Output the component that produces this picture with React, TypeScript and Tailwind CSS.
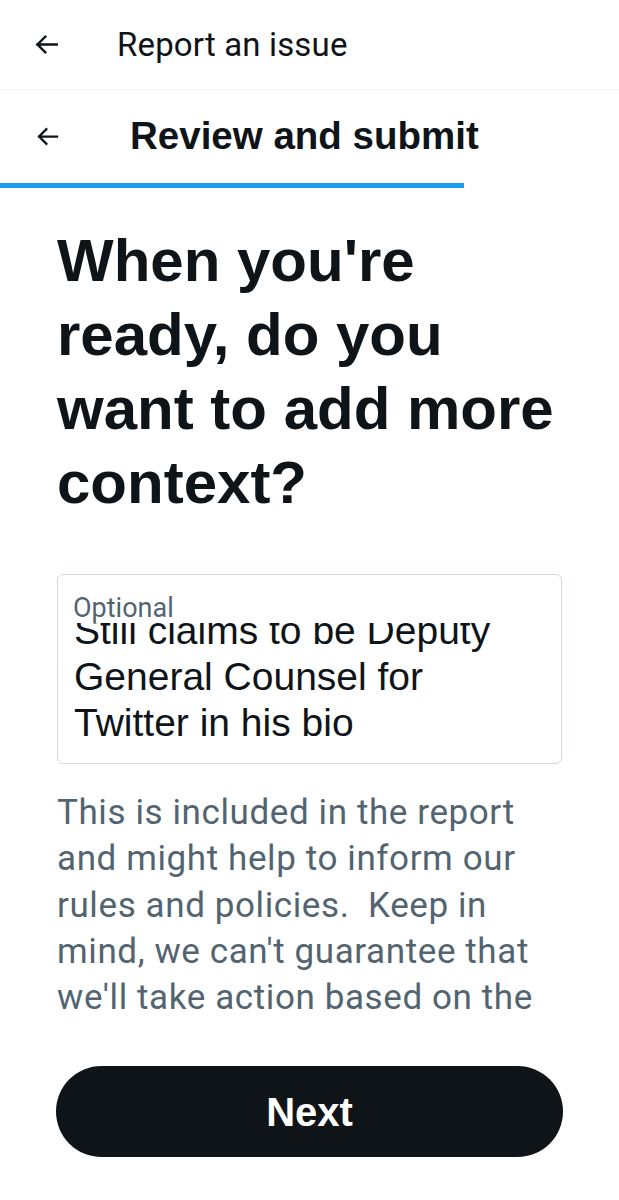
import React from "react";

function Arrow({ size = 28 }: { size?: number }) {
  return (
    <svg width={size} height={size} viewBox="0 0 24 24" fill="none">
      <path d="M20.5 12H4.5M11 5.5L4.5 12l6.5 6.5" stroke="#0f1419" strokeWidth="2" strokeLinecap="square" />
    </svg>
  );
}

export default function App() {
  return (
    <div className="w-[619px] h-[1200px] bg-white overflow-hidden flex flex-col" style={{ fontFamily: "Roboto, 'Liberation Sans', sans-serif" }}>
      <div className="h-[90px] flex items-center border-b border-[#eff3f4] shrink-0">
        <div className="w-[117px] pl-[32px] flex items-center">
          <Arrow size={29} />
        </div>
        <span className="text-[33px] text-[#0f1419] leading-none tracking-[0.15px]">Report an issue</span>
      </div>
      <div className="h-[93px] flex items-center shrink-0">
        <div className="w-[130px] pl-[34px] flex items-center">
          <Arrow size={27} />
        </div>
        <span className="text-[38.5px] font-bold text-[#0f1419] leading-none font-['Liberation_Sans',sans-serif]">Review and submit</span>
      </div>
      <div className="h-[5px] w-[464px] bg-[#1d9bf0] shrink-0" />
      <div className="h-[830px] overflow-hidden px-[57px] shrink-0">
        <h1 className="mt-[36px] text-[60px] leading-[74px] font-bold text-[#0f1419] font-['Liberation_Sans',sans-serif]">
          When you're ready, do you want to add more context?
        </h1>
        <div className="mt-[54px] h-[190px] rounded-[6px] border border-[#cfd9de] flex flex-col overflow-hidden">
          <div className="h-[48px] shrink-0 pl-[15px] pt-[20px] text-[27px] leading-none text-[#536471]">Optional</div>
          <div className="flex-1 overflow-hidden">
            <div className="-mt-[15px] pl-[16px] pr-[16px] text-[39px] leading-[46px] text-[#0f1419] font-['Liberation_Sans',sans-serif]">
              <div className="whitespace-nowrap">Still claims to be Deputy</div>
              <div className="whitespace-nowrap">General Counsel for</div>
              <div className="whitespace-nowrap">Twitter in his bio</div>
            </div>
          </div>
        </div>
        <p className="mt-[26px] text-[35px] leading-[46.25px] text-[#536471] whitespace-nowrap tracking-[0.6px]">
          This is included in the report
          <br />
          and might help to inform our
          <br />
          rules and policies.&nbsp; Keep in
          <br />
          mind, we can't guarantee that
          <br />
          we'll take action based on the
          <br />
          information you share.
        </p>
      </div>
      <div className="px-[56px] pt-[48px] shrink-0">
        <button className="w-full h-[91px] rounded-full bg-[#0f1419] text-white text-[40px] font-bold font-['Liberation_Sans',sans-serif]">
          Next
        </button>
      </div>
    </div>
  );
}
